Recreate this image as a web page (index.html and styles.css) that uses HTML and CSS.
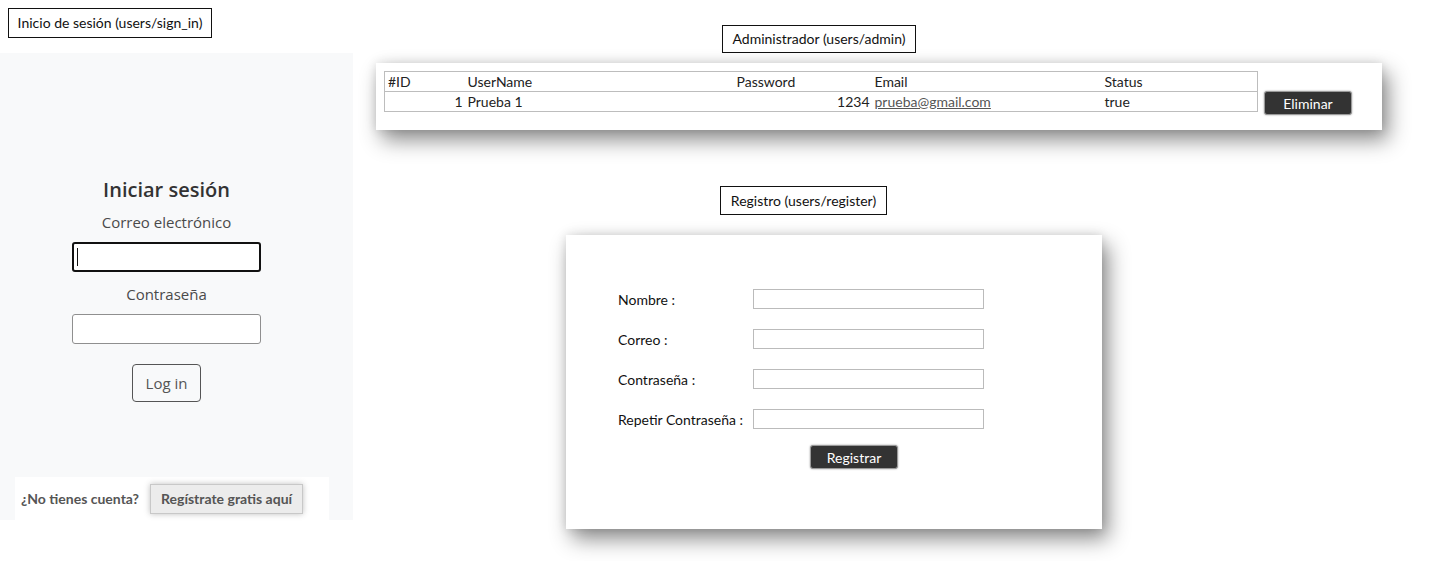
FILE: index.html
```html
<!DOCTYPE html>
<html lang="es">
<head>
<meta charset="utf-8">
<title>Mockups</title>
<link rel="stylesheet" href="styles.css">
</head>
<body>
<div class="canvas">
  <div class="tag tag-signin">Inicio de sesión (users/sign_in)</div>

  <section class="signin">
    <div class="signin-form">
      <h1 class="signin-title">Iniciar sesión</h1>
      <label class="signin-label">Correo electrónico</label>
      <div class="signin-input focused"><span class="caret"></span></div>
      <label class="signin-label second">Contraseña</label>
      <div class="signin-input"></div>
      <button class="login-btn">Log in</button>
    </div>
    <div class="signup-strip">
      <span class="signup-text">¿No tienes cuenta?</span>
      <button class="signup-btn">Regístrate gratis aquí</button>
    </div>
  </section>

  <div class="tag tag-admin">Administrador (users/admin)</div>
  <section class="admin">
    <table class="users">
      <colgroup>
        <col class="c-id"><col class="c-user"><col class="c-pass"><col class="c-mail"><col class="c-status">
      </colgroup>
      <tr class="head">
        <td>#ID</td><td>UserName</td><td>Password</td><td>Email</td><td>Status</td>
      </tr>
      <tr>
        <td class="num">1</td><td>Prueba 1</td><td class="num">1234</td><td><a href="#" class="mail">prueba@gmail.com</a></td><td>true</td>
      </tr>
    </table>
    <button class="dark-btn eliminar">Eliminar</button>
  </section>

  <div class="tag tag-register">Registro (users/register)</div>
  <section class="register">
    <div class="reg-grid">
      <span class="reg-label">Nombre :</span><div class="reg-input"></div>
      <span class="reg-label">Correo :</span><div class="reg-input"></div>
      <span class="reg-label">Contraseña :</span><div class="reg-input"></div>
      <span class="reg-label">Repetir Contraseña :</span><div class="reg-input"></div>
    </div>
    <button class="dark-btn registrar">Registrar</button>
  </section>
</div>
</body>
</html>
```
FILE: styles.css
```css
* { box-sizing: border-box; }
html, body { margin: 0; padding: 0; background: #fff; }
body { font-family: "Lato", "Liberation Sans", sans-serif; color: #111; }

.canvas { position: relative; width: 1431px; height: 561px; overflow: hidden; background: #fff; }

.tag {
  position: absolute;
  border: 1px solid #111;
  background: #fff;
  font-size: 14px;
  line-height: 27px;
  text-align: center;
  color: #111;
}
.tag-signin { left: 8px; top: 8px; width: 204px; height: 30px; line-height: 28px; }
.tag-admin { left: 722px; top: 25px; width: 194px; height: 28px; line-height: 26px; }
.tag-register { left: 720px; top: 186px; width: 167px; height: 29px; line-height: 27px; }

/* Sign in */
.signin {
  position: absolute;
  left: 0; top: 53px;
  width: 353px; height: 467px;
  background: #f8f9fa;
  font-family: "Open Sans", "Noto Sans", sans-serif;
}
.signin-form {
  width: 333px;
  padding-top: 124px;
  display: flex;
  flex-direction: column;
  align-items: center;
}
.signin-title {
  margin: 0;
  font-size: 20px;
  line-height: 26px;
  font-weight: 600;
  color: #333;
}
.signin-label {
  font-size: 15px;
  line-height: 22px;
  color: #4a4a4a;
  margin-top: 8px;
}
.signin-label.second { margin-top: 11px; }
.signin-input {
  width: 189px;
  height: 30px;
  margin-top: 9px;
  background: #fff;
  border: 1px solid #8f8f8f;
  border-radius: 3px;
  display: flex;
  align-items: center;
  padding-left: 3px;
}
.signin-input.focused { border: 2px solid #111; }
.caret { width: 1px; height: 18px; background: #111; }
.login-btn {
  margin-top: 20px;
  width: 69px;
  height: 38px;
  border: 1px solid #555;
  border-radius: 4px;
  background: transparent;
  font-family: "Open Sans", "Noto Sans", sans-serif;
  font-size: 15px;
  color: #555;
  padding: 0;
}
.signup-strip {
  position: absolute;
  left: 15px; top: 424px;
  width: 314px; height: 43px;
  background: #fff;
  display: flex;
  align-items: center;
  padding-left: 6px;
  gap: 11px;
  font-family: "Lato", "Liberation Sans", sans-serif;
}
.signup-text { font-size: 14px; font-weight: 700; color: #555; }
.signup-btn {
  width: 153px; height: 30px;
  background: #ececec;
  border: 1px solid #c8c8c8;
  box-shadow: 0 0 6px rgba(0,0,0,0.25);
  font-family: "Lato", "Liberation Sans", sans-serif;
  font-size: 14px;
  font-weight: 700;
  color: #555;
  padding: 0;
}

/* Admin */
.admin {
  position: absolute;
  left: 376px; top: 63px;
  width: 1006px; height: 67px;
  background: #fff;
  box-shadow: 6px 10px 20px rgba(0,0,0,0.45), 0 0 10px rgba(0,0,0,0.12);
  padding: 8px 0 0 8px;
  display: flex;
  align-items: flex-start;
  gap: 6px;
}
.users {
  width: 873px;
  table-layout: fixed;
  border-collapse: collapse;
  border: 1px solid #bdbdbd;
  font-size: 14px;
  color: #222;
}
.users td { height: 20px; padding: 0 3px; line-height: 18px; white-space: nowrap; }
.users tr.head td { border-bottom: 1px solid #bdbdbd; }
.users td.num { text-align: right; padding-right: 2px; }
.c-id { width: 80px; }
.c-user { width: 269px; }
.c-pass { width: 138px; }
.c-mail { width: 230px; }
.c-status { width: 156px; }
.mail { color: #555; text-decoration: underline; }

.dark-btn {
  background: #333;
  color: #fff;
  border: 1px solid #9a9a9a;
  border-radius: 3px;
  font-family: "Lato", "Liberation Sans", sans-serif;
  font-size: 14px;
  padding: 0;
  box-shadow: 0 0 2px rgba(0,0,0,0.4);
}
.eliminar { width: 88px; height: 24px; margin-top: 20px; }

/* Register */
.register {
  position: absolute;
  left: 566px; top: 235px;
  width: 536px; height: 294px;
  background: #fff;
  box-shadow: 6px 10px 20px rgba(0,0,0,0.45), 0 0 10px rgba(0,0,0,0.12);
  padding: 54px 0 0 52px;
  display: flex;
  flex-direction: column;
}
.reg-grid {
  display: grid;
  grid-template-columns: 135px 231px;
  row-gap: 20px;
  align-items: center;
}
.reg-label { font-size: 14px; color: #111; }
.reg-input { height: 20px; border: 1px solid #bbb; background: #fff; }
.registrar { width: 88px; height: 24px; margin-top: 16px; margin-left: 192px; }
```
